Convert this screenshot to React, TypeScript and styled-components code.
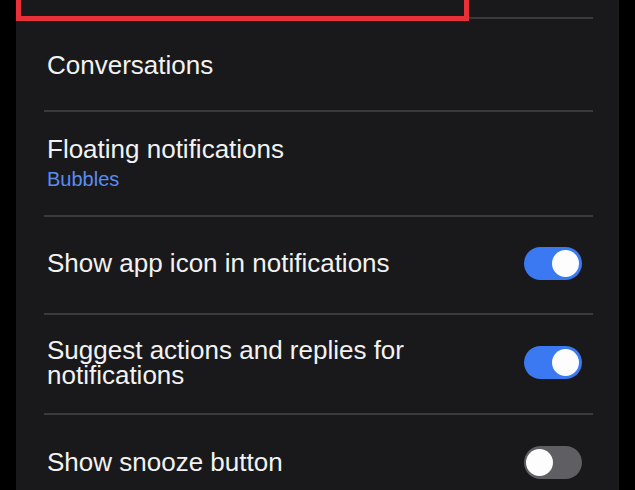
import React, { useState } from 'react';
import styled, { createGlobalStyle } from 'styled-components';

const GlobalStyle = createGlobalStyle`
  html, body {
    margin: 0;
    padding: 0;
    background: #000;
    width: 635px;
    height: 490px;
    overflow: hidden;
  }
  body {
    font-family: "Liberation Sans", Arial, Helvetica, sans-serif;
    -webkit-font-smoothing: antialiased;
  }
`;

const Screen = styled.div`
  width: 635px;
  height: 490px;
  background: #000;
  display: flex;
`;

const Panel = styled.div`
  position: relative;
  margin-left: 16px;
  width: 603px;
  height: 100%;
  background: #19191b;
  display: flex;
  flex-direction: column;
`;

// Highlight frame drawn over the (cut off) first row
const Highlight = styled.div`
  position: absolute;
  left: 0;
  top: -12px;
  width: 453px;
  height: 33px;
  box-sizing: border-box;
  border: 5px solid #e93038;
  pointer-events: none;
`;

// $lift > 0 nudges the content up, < 0 nudges it down
const Row = styled.div<{ $height: number; $lift?: number; $last?: boolean }>`
  flex: none;
  height: ${p => p.$height}px;
  margin: 0 26px 0 28px;
  padding-left: 3px;
  padding-right: 11px;
  padding-top: ${p => Math.max(0, -(p.$lift ?? 0))}px;
  padding-bottom: ${p => Math.max(0, p.$lift ?? 0)}px;
  box-sizing: border-box;
  display: flex;
  align-items: center;
  justify-content: space-between;
  gap: 20px;
  border-bottom: ${p => (p.$last ? 'none' : '2px solid #3a3a3c')};
`;

const TextBlock = styled.div`
  display: flex;
  flex-direction: column;
  gap: 5px;
  max-width: 460px;
`;

const Title = styled.div`
  color: #f2f2f2;
  font-size: 26px;
  line-height: 25px;
`;

const Subtitle = styled.div`
  color: #5a8cf0;
  font-size: 20px;
  line-height: 24px;
`;

const Track = styled.button<{ $on: boolean }>`
  flex: none;
  width: 58px;
  height: 33px;
  border: none;
  padding: 0;
  border-radius: 17px;
  background: ${p => (p.$on ? '#3a79f2' : '#5f5f63')};
  position: relative;
  cursor: pointer;
`;

const Knob = styled.span<{ $on: boolean }>`
  position: absolute;
  top: 3px;
  left: ${p => (p.$on ? '28px' : '2px')};
  width: 27px;
  height: 27px;
  border-radius: 50%;
  background: #fdfdfd;
`;

function Toggle({ initial }: { initial: boolean }) {
  const [on, setOn] = useState(initial);
  return (
    <Track $on={on} onClick={() => setOn(v => !v)}>
      <Knob $on={on} />
    </Track>
  );
}

export default function App() {
  return (
    <Screen>
      <GlobalStyle />
      <Panel>
        <Row $height={19} />
        <Row $height={93} $lift={-2}>
          <TextBlock>
            <Title>Conversations</Title>
          </TextBlock>
        </Row>
        <Row $height={105}>
          <TextBlock>
            <Title>Floating notifications</Title>
            <Subtitle>Bubbles</Subtitle>
          </TextBlock>
        </Row>
        <Row $height={98} $lift={4}>
          <TextBlock>
            <Title>Show app icon in notifications</Title>
          </TextBlock>
          <Toggle initial />
        </Row>
        <Row $height={100} $lift={3}>
          <TextBlock>
            <Title>Suggest actions and replies for notifications</Title>
          </TextBlock>
          <Toggle initial />
        </Row>
        <Row $height={94} $last>
          <TextBlock>
            <Title>Show snooze button</Title>
          </TextBlock>
          <Toggle initial={false} />
        </Row>
        <Highlight />
      </Panel>
    </Screen>
  );
}
